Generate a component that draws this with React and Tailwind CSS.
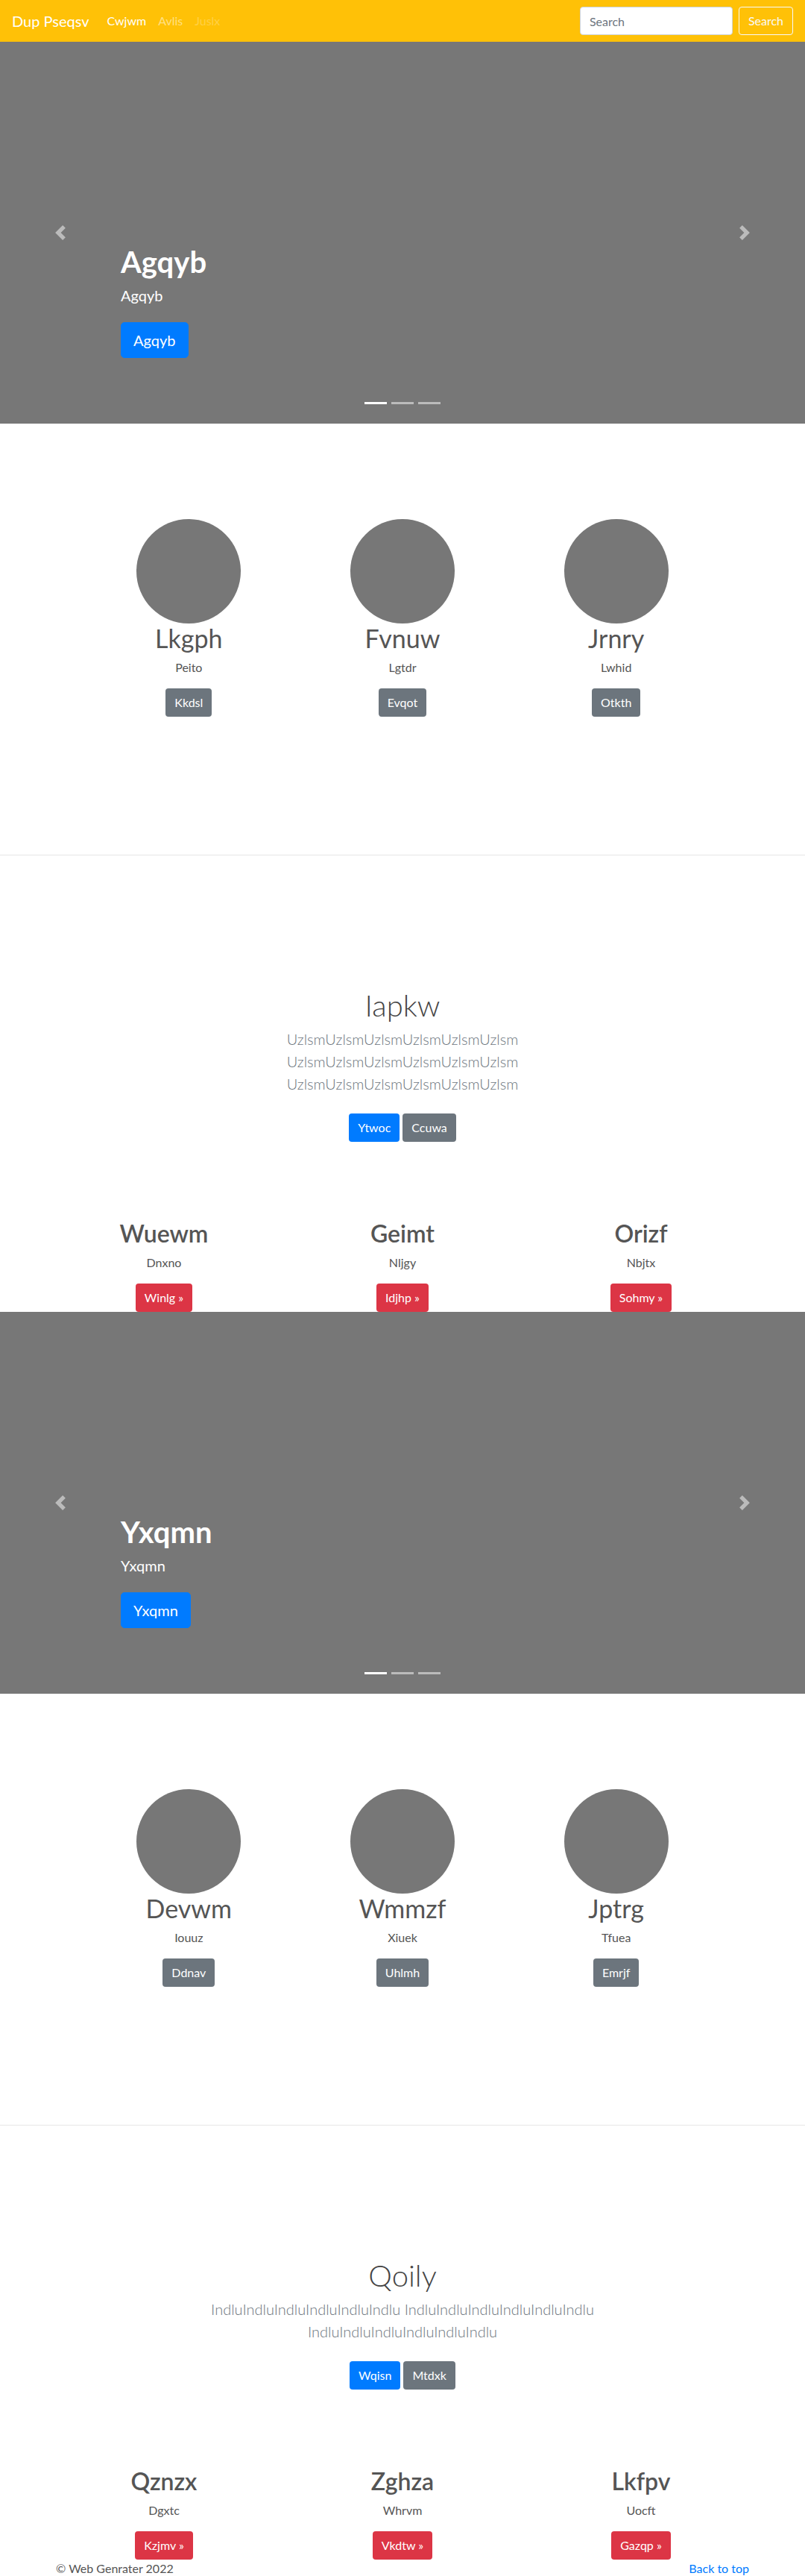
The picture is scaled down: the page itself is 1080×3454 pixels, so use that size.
import React from 'react';

const blocks = [
  {
    slide: 'Agqyb',
    circles: [
      { name: 'Lkgph', sub: 'Peito', btn: 'Kkdsl' },
      { name: 'Fvnuw', sub: 'Lgtdr', btn: 'Evqot' },
      { name: 'Jrnry', sub: 'Lwhid', btn: 'Otkth' },
    ],
    title: 'Iapkw',
    word: 'UzlsmUzlsmUzlsmUzlsmUzlsmUzlsm',
    actions: ['Ytwoc', 'Ccuwa'],
    features: [
      { name: 'Wuewm', sub: 'Dnxno', btn: 'Winlg' },
      { name: 'Geimt', sub: 'Nljgy', btn: 'Idjhp' },
      { name: 'Orizf', sub: 'Nbjtx', btn: 'Sohmy' },
    ],
  },
  {
    slide: 'Yxqmn',
    circles: [
      { name: 'Devwm', sub: 'Iouuz', btn: 'Ddnav' },
      { name: 'Wmmzf', sub: 'Xiuek', btn: 'Uhlmh' },
      { name: 'Jptrg', sub: 'Tfuea', btn: 'Emrjf' },
    ],
    title: 'Qoily',
    word: 'IndluIndluIndluIndluIndluIndlu',
    actions: ['Wqisn', 'Mtdxk'],
    features: [
      { name: 'Qznzx', sub: 'Dgxtc', btn: 'Kzjmv' },
      { name: 'Zghza', sub: 'Whrvm', btn: 'Vkdtw' },
      { name: 'Lkfpv', sub: 'Uocft', btn: 'Gazqp' },
    ],
  },
];

const Chevron = ({ next }) => (
  <svg width="20" height="20" viewBox="0 0 8 8" fill="#fff" className="opacity-50">
    {next ? (
      <path d="M2.75 0l-1.5 1.5L3.75 4l-2.5 2.5L2.75 8l4-4-4-4z" />
    ) : (
      <path d="M5.25 0l-4 4 4 4 1.5-1.5L4.25 4l2.5-2.5L5.25 0z" />
    )}
  </svg>
);

const Navbar = () => (
  <nav className="h-14 bg-[#ffc107] flex items-center px-4">
    <a className="text-white text-[20px] leading-[30px] mr-4">Dup Pseqsv</a>
    <ul className="flex text-[16px] leading-6">
      <li className="px-2 text-white">Cwjwm</li>
      <li className="px-2 text-[#ffe083]">Avlis</li>
      <li className="px-2 text-[#ffd045]">Juslx</li>
    </ul>
    <form className="ml-auto flex items-center">
      <input
        placeholder="Search"
        className="w-[205px] h-[38px] px-3 mr-2 bg-white border border-[#ced4da] rounded text-[16px] placeholder:text-[#6c757d] outline-none"
      />
      <button type="button" className="h-[38px] px-3 border border-[#f8f9fa] rounded text-[#f8f9fa] text-[16px]">
        Search
      </button>
    </form>
  </nav>
);

const Carousel = ({ label }) => (
  <div className="relative h-[512px] bg-[#777]">
    <div className="absolute inset-y-0 left-0 w-[15%] flex items-center justify-center">
      <Chevron />
    </div>
    <div className="absolute inset-y-0 right-0 w-[15%] flex items-center justify-center">
      <Chevron next />
    </div>
    <div className="absolute left-[15%] top-[271px] text-white">
      <h1 className="text-[40px] font-bold leading-[1.2] mb-[6px]">{label}</h1>
      <p className="text-[20px] leading-[30px] mb-[21px]">{label}</p>
      <a className="inline-block bg-[#007bff] border border-[#007bff] text-[20px] leading-[30px] px-4 py-2 rounded-[5px]">
        {label}
      </a>
    </div>
    <div className="absolute bottom-[26px] inset-x-0 flex justify-center">
      <span className="w-[30px] h-[3px] mx-[3px] bg-white" />
      <span className="w-[30px] h-[3px] mx-[3px] bg-white/50" />
      <span className="w-[30px] h-[3px] mx-[3px] bg-white/50" />
    </div>
  </div>
);

const Block = ({ data }) => (
  <>
    <Carousel label={data.slide} />

    {/* circles */}
    <section className="pt-[128px] pb-[185px]">
      <div className="w-[860px] mx-auto grid grid-cols-3 text-center">
        {data.circles.map((c) => (
          <div key={c.name} className="flex flex-col items-center">
            <div className="w-[140px] h-[140px] rounded-full bg-[#777]" />
            <h2 className="text-[34px] leading-[1.2] font-normal text-[#555]">{c.name}</h2>
            <p className="mt-[6px] text-[16px] leading-6 text-[#555]">{c.sub}</p>
            <a className="mt-4 inline-block bg-[#6c757d] text-white text-[16px] leading-6 px-3 py-[7px] rounded">
              {c.btn}
            </a>
          </div>
        ))}
      </div>
    </section>
    <hr className="border-0 border-t border-[#e6e6e6]" />

    {/* product */}
    <section className="pt-[177px] text-center">
      <div className="w-[560px] mx-auto">
        <h1 className="text-[40px] leading-[1.2] font-light text-[#444] mb-[6px]">{data.title}</h1>
        <p className="text-[20px] leading-[30px] font-light text-[#6c757d] mb-[25px]">
          {data.word} {data.word} {data.word}
        </p>
        <div className="flex justify-center gap-1">
          <a className="inline-block bg-[#007bff] text-white text-[16px] leading-6 px-3 py-[7px] rounded">
            {data.actions[0]}
          </a>
          <a className="inline-block bg-[#6c757d] text-white text-[16px] leading-6 px-3 py-[7px] rounded">
            {data.actions[1]}
          </a>
        </div>
      </div>
    </section>

    {/* features */}
    <section className="pt-[104px]">
      <div className="w-[960px] mx-auto grid grid-cols-3 text-center">
        {data.features.map((f) => (
          <div key={f.name} className="flex flex-col items-center">
            <h2 className="text-[32px] leading-[1.2] font-semibold text-[#555]">{f.name}</h2>
            <p className="mt-2 text-[16px] leading-6 text-[#555]">{f.sub}</p>
            <a className="mt-4 inline-block bg-[#dc3545] text-white text-[16px] leading-6 px-3 py-[7px] rounded">
              {f.btn} »
            </a>
          </div>
        ))}
      </div>
    </section>
  </>
);

export default function App() {
  return (
    <div className="font-[Lato,sans-serif] bg-white">
      <Navbar />
      {blocks.map((b) => (
        <Block key={b.slide} data={b} />
      ))}
      <footer className="w-[960px] mx-auto px-[15px] flex justify-between text-[16px] leading-6 text-[#555]">
        <p>© Web Genrater 2022</p>
        <a className="text-[#007bff]">Back to top</a>
      </footer>
    </div>
  );
}
